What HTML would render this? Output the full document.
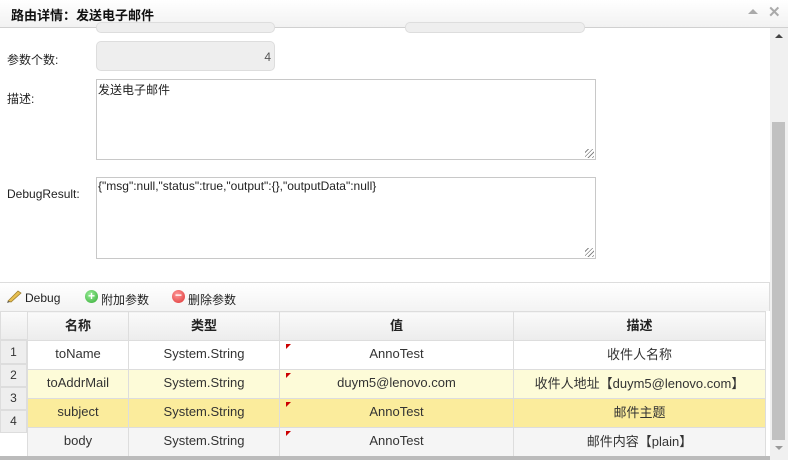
<!DOCTYPE html>
<html><head><meta charset="utf-8"><style>
*{margin:0;padding:0;box-sizing:border-box}
body{width:788px;height:460px;overflow:hidden;background:#fff;font-family:"Liberation Sans","Noto Sans CJK SC",sans-serif;font-size:12px;color:#333;position:relative}
.abs{position:absolute}
.hdr{left:0;top:0;width:788px;height:28px;background:linear-gradient(#fff,#f2f2f2);border-bottom:1px solid #d0d0d0}
.hdr b{position:absolute;left:11px;top:5px;font-size:13px;color:#111}
.inp{background:#eee;border:1px solid #ddd;border-radius:5px}
.ta{border:1px solid #c8c8c8;background:#fff;font-size:12px;padding:1px 0 0 1px;color:#222}
.lbl{font-size:12px;color:#222}
.grip{position:absolute;right:1px;bottom:1px;width:9px;height:9px;background:repeating-linear-gradient(135deg,transparent 0 2px,#888 2px 3px)}
.sb{left:770px;top:28px;width:18px;height:432px;background:#f0f0f0}
.th{left:772px;top:122px;width:13px;height:318px;background:#c1c1c1}
table{border-collapse:collapse;position:absolute;left:27px;top:311px;font-size:13px}
td,th{border:1px solid #ddd;text-align:center;height:29px;position:relative;padding:0 0 3px 0}
th{background:linear-gradient(#fafafa,#ececec);font-weight:bold;color:#222;height:29px}
td{color:#333}
.mk:before{content:"";position:absolute;left:6px;top:3px;border-top:5px solid #c00;border-right:5px solid transparent}
.rn{position:absolute;left:0;width:27px;background:#eee;border:1px solid #ddd;text-align:center;font-size:12px}
</style></head><body>
<div class="abs hdr"><b>路由详情：发送电子邮件</b>
<span class="abs" style="left:748px;top:9px;border-left:5px solid transparent;border-right:5px solid transparent;border-bottom:5px solid #aaa"></span>
<span class="abs" style="left:768px;top:3px;color:#aaa;font-size:15px;font-weight:bold">✕</span></div>
<div class="abs inp" style="left:96px;top:22px;width:179px;height:11px"></div>
<div class="abs inp" style="left:405px;top:22px;width:180px;height:11px"></div>
<div class="abs lbl" style="left:7px;top:51px">参数个数:</div>
<div class="abs inp" style="left:96px;top:41px;width:179px;height:30px;text-align:right;padding:8px 3px 0 0;color:#555">4</div>
<div class="abs lbl" style="left:7px;top:90px">描述:</div>
<div class="abs ta" style="left:96px;top:79px;width:500px;height:81px">发送电子邮件<div class="grip"></div></div>
<div class="abs lbl" style="left:7px;top:187px">DebugResult:</div>
<div class="abs ta" style="left:96px;top:177px;width:500px;height:82px">{"msg":null,"status":true,"output":{},"outputData":null}<div class="grip"></div></div>
<div class="abs" style="left:0;top:282px;width:770px;height:29px;border-top:1px solid #ddd;border-right:1px solid #ddd;background:linear-gradient(#fff,#f3f3f3)"></div>
<div class="abs" style="left:6px;top:289px;width:16px;height:14px"><svg width="16" height="14"><path d="M2 12 L12 2 L15 4 L5 13 Z" fill="#e8c050" stroke="#a08030" stroke-width=".8"/><path d="M2 12 L1 14 L4 13Z" fill="#555"/></svg></div>
<div class="abs" style="left:25px;top:291px;font-size:12px;color:#222">Debug</div>
<div class="abs" style="left:85px;top:290px;width:13px;height:13px;border-radius:50%;background:radial-gradient(circle at 40% 35%,#9e9,#3a3);color:#fff;font-size:12px;line-height:12px;text-align:center;font-weight:bold">+</div>
<div class="abs" style="left:101px;top:291px;color:#222">附加参数</div>
<div class="abs" style="left:172px;top:290px;width:13px;height:13px;border-radius:50%;background:radial-gradient(circle at 40% 35%,#f99,#d33);color:#fff;font-size:12px;line-height:11px;text-align:center;font-weight:bold">−</div>
<div class="abs" style="left:188px;top:291px;color:#222">删除参数</div>
<div class="abs" style="left:0;top:311px;width:28px;height:29px;background:linear-gradient(#fafafa,#ececec);border:1px solid #ddd"></div>
<div class="rn" style="top:340px;height:24px;line-height:22px">1</div>
<div class="rn" style="top:364px;height:23px;line-height:21px">2</div>
<div class="rn" style="top:387px;height:23px;line-height:21px">3</div>
<div class="rn" style="top:410px;height:23px;line-height:21px">4</div>
<table>
<tr><th style="width:101px">名称</th><th style="width:151px">类型</th><th style="width:234px">值</th><th style="width:252px">描述</th></tr>
<tr style="background:#fff"><td>toName</td><td>System.String</td><td class="mk">AnnoTest</td><td>收件人名称</td></tr>
<tr style="background:#fdfbd8"><td>toAddrMail</td><td>System.String</td><td class="mk">duym5@lenovo.com</td><td>收件人地址【duym5@lenovo.com】</td></tr>
<tr style="background:#fbec9c"><td>subject</td><td>System.String</td><td class="mk">AnnoTest</td><td>邮件主题</td></tr>
<tr style="background:#f5f5f5"><td>body</td><td>System.String</td><td class="mk">AnnoTest</td><td>邮件内容【plain】</td></tr>
</table>
<div class="abs" style="left:0;top:456px;width:770px;height:4px;background:#bbb"></div>
<div class="abs sb"></div>
<div class="abs th"></div>
<span class="abs" style="left:775px;top:34px;border-left:4px solid transparent;border-right:4px solid transparent;border-bottom:4px solid #444"></span>
<span class="abs" style="left:775px;top:446px;border-left:4px solid transparent;border-right:4px solid transparent;border-top:4px solid #999"></span>
</body></html>
